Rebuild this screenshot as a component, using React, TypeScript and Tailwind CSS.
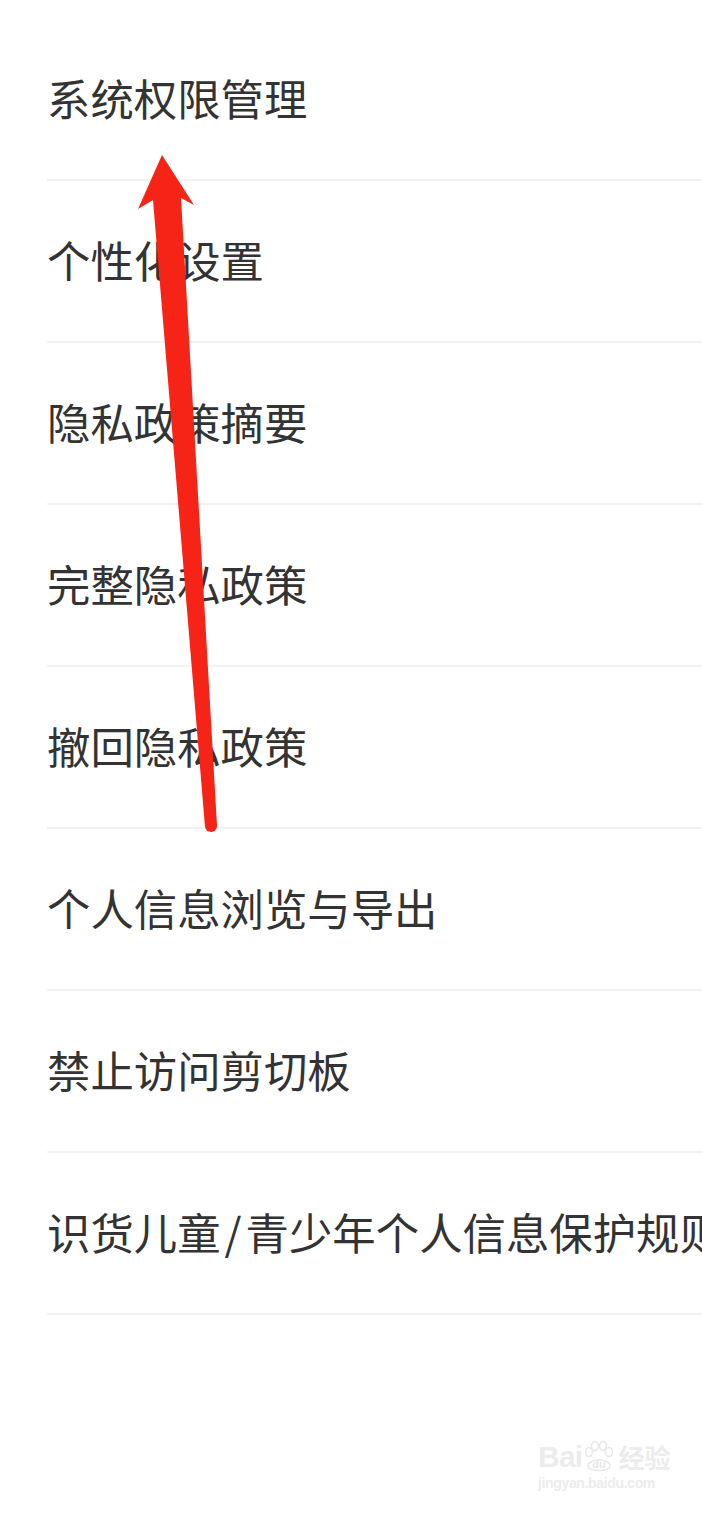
import React from "react";

const items: React.ReactNode[] = [
  "系统权限管理",
  "个性化设置",
  "隐私政策摘要",
  "完整隐私政策",
  "撤回隐私政策",
  "个人信息浏览与导出",
  "禁止访问剪切板",
  <>
    识货儿童<span className="px-[4px]">/</span>青少年个人信息保护规则
  </>,
];

export default function App() {
  return (
    <div
      className="relative w-[702px] h-[1519px] bg-white overflow-hidden"
      style={{ fontFamily: '"Noto Sans CJK SC", "Noto Sans", sans-serif' }}
    >
      <div className="pt-[19px] pl-[47px]">
        {items.map((t, i) => (
          <div
            key={i}
            className="h-[162px] flex items-center border-b-2 border-[#f2f2f2] overflow-hidden"
          >
            <span className="text-[43.4px] leading-none text-[#333333] whitespace-nowrap -mt-[3px]">
              {t}
            </span>
          </div>
        ))}
      </div>

      <svg
        className="absolute left-0 top-0 pointer-events-none"
        width="702"
        height="1519"
        viewBox="0 0 702 1519"
      >
        <polygon
          points="162,155 194,205 181,198 217,826 205,827 153,200 138,209"
          fill="#f62417"
        />
        <circle cx="211" cy="826" r="6" fill="#f62417" />
      </svg>

      <div
        className="absolute left-[538px] top-[1440px] text-[#ececec] pointer-events-none"
        style={{ fontFamily: '"Liberation Sans", "Noto Sans CJK SC", sans-serif' }}
      >
        <div className="flex items-end">
          <span className="text-[30px] leading-none font-bold tracking-tight">Bai</span>
          <span className="relative inline-flex items-end">
            <svg width="34" height="34" viewBox="0 0 34 34" className="-mb-[2px]">
              <g fill="none" stroke="#e8e8e8" strokeWidth="1.5">
                <ellipse cx="7" cy="12" rx="3.5" ry="4.5" />
                <ellipse cx="13" cy="6" rx="3.5" ry="4.5" />
                <ellipse cx="21" cy="6" rx="3.5" ry="4.5" />
                <ellipse cx="27" cy="12" rx="3.5" ry="4.5" />
                <path d="M6 26 C6 18 28 18 28 26 C28 32 6 32 6 26 Z" />
              </g>
              <text x="17" y="28" textAnchor="middle" fontSize="11" fill="#e8e8e8" fontFamily="Liberation Sans, sans-serif" fontWeight="bold">du</text>
            </svg>
          </span>
          <span className="text-[26px] leading-none font-bold ml-[2px]">经验</span>
        </div>
        <div className="text-[14px] leading-none mt-[4px] font-bold tracking-tight">jingyan.baidu.com</div>
      </div>
    </div>
  );
}
